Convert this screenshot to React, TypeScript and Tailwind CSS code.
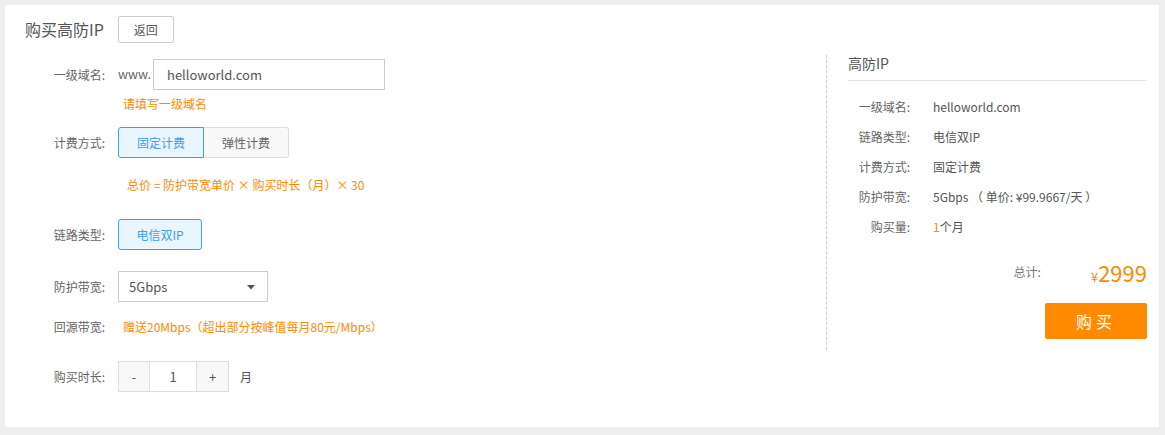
import React from "react";

const font = "font-['Noto_Sans_CJK_SC','Noto_Sans',sans-serif]";

const Label = ({ children }: { children: React.ReactNode }) => (
  <div className="w-[100px] shrink-0 text-right text-[12px] text-[#666]">{children}</div>
);

const summary = [
  { k: "一级域名:", v: "helloworld.com" },
  { k: "链路类型:", v: "电信双IP" },
  { k: "计费方式:", v: "固定计费" },
  { k: "防护带宽:", v: "5Gbps （ 单价: ¥99.9667/天 ）" },
];

const App = () => {
  return (
    <div className={`min-h-[435px] bg-[#eeeeee] pt-[5px] pl-[5px] pr-[6px] pb-[8px] ${font}`}>
      <div className="flex h-[422px] bg-white">
        {/* form */}
        <div className="flex-1">
          <div className="flex items-center pt-[11px] pl-[20px]">
            <h1 className="text-[16px] leading-[27px] text-[#555]">购买高防IP</h1>
            <button className="ml-[14px] h-[27px] w-[56px] rounded-[2px] border border-[#ccc] bg-white text-[12px] text-[#555]">
              返回
            </button>
          </div>

          <div className="mt-[16px] flex items-center">
            <Label>一级域名:</Label>
            <span className="ml-[13px] w-[35px] text-[12.5px] text-[#666]">www.</span>
            <div className="flex h-[31px] w-[232px] items-center border border-[#ccc] pl-[13px] text-[13px] text-[#555]">
              helloworld.com
            </div>
          </div>
          <div className="mt-[6px] pl-[118px] text-[12px] leading-[16px] text-[#ff8a00]">请填写一级域名</div>

          <div className="mt-[15px] flex items-center">
            <Label>计费方式:</Label>
            <div className="ml-[13px] flex">
              <div className="flex h-[31px] w-[86px] items-center justify-center rounded-l-[3px] border border-[#3d9df0] bg-[#eaf6ff] text-[12px] text-[#3d9df0]">
                固定计费
              </div>
              <div className="flex h-[31px] w-[85px] items-center justify-center rounded-r-[3px] border border-l-0 border-[#ddd] bg-[#f8f8f8] text-[12px] text-[#666]">
                弹性计费
              </div>
            </div>
          </div>
          <div className="mt-[19px] pl-[122px] text-[12px] leading-[16px] text-[#ff8a00]">
            总价 = 防护带宽单价 × 购买时长（月）× 30
          </div>

          <div className="mt-[26px] flex items-center">
            <Label>链路类型:</Label>
            <div className="ml-[13px] flex h-[31px] w-[84px] items-center justify-center rounded-[3px] border border-[#3d9df0] bg-[#eaf6ff] text-[12px] text-[#3d9df0]">
              电信双IP
            </div>
          </div>

          <div className="mt-[21px] flex items-center">
            <Label>防护带宽:</Label>
            <div className="ml-[13px] flex h-[31px] w-[150px] items-center justify-between border border-[#ccc] pl-[10px] pr-[11px] text-[13px] text-[#555]">
              <span>5Gbps</span>
              <svg width="10" height="6" viewBox="0 0 10 6">
                <path d="M1 1h8L5 5.5z" fill="#555" />
              </svg>
            </div>
          </div>

          <div className="mt-[17px] flex items-center leading-[16px]">
            <Label>回源带宽:</Label>
            <span className="ml-[18px] text-[12px] text-[#ff8a00]">
              赠送20Mbps（超出部分按峰值每月80元/Mbps）
            </span>
          </div>

          <div className="mt-[26px] flex items-center">
            <Label>购买时长:</Label>
            <div className="ml-[13px] flex h-[31px] border border-[#ddd] text-[13px] text-[#555]">
              <div className="flex w-[30px] items-center justify-center bg-[#f8f8f8]">-</div>
              <div className="flex w-[48px] items-center justify-center border-x border-[#ddd]">1</div>
              <div className="flex w-[31px] items-center justify-center bg-[#f8f8f8]">+</div>
            </div>
            <span className="ml-[11px] text-[12px] text-[#555]">月</span>
          </div>
        </div>

        {/* summary */}
        <div className="mt-[50px] h-[295px] w-[333px] border-l border-dashed border-[#ccc] pl-[21px] pr-[12px]">
          <div className="border-b border-[#e5e5e5] pb-[9px] text-[14px] leading-[16px] text-[#555]">高防IP</div>
          <div className="mt-[11px]">
            {summary.map((r) => (
              <div key={r.k} className="flex h-[30px] items-center text-[12px]">
                <span className="w-[62px] text-right text-[#666]">{r.k}</span>
                <span className="ml-[23px] text-[#555]">{r.v}</span>
              </div>
            ))}
            <div className="flex h-[30px] items-center text-[12px]">
              <span className="w-[62px] text-right text-[#666]">购买量:</span>
              <span className="ml-[23px] text-[#555]">
                <span className="text-[#ff8a00]">1</span>个月
              </span>
            </div>
          </div>
          <div className="mt-[15px] flex h-[30px] items-center justify-end">
            <span className="text-[12px] text-[#777]">总计:</span>
            <span className="ml-[50px] text-[#ff8a00]">
              <span className="text-[13px]">¥</span>
              <span className="text-[22px]">2999</span>
            </span>
          </div>
          <div className="mt-[16px] flex justify-end">
            <button className="h-[36px] w-[102px] rounded-[2px] bg-[#ff8a00] text-[16px] tracking-[4px] text-white">
              购买
            </button>
          </div>
        </div>
      </div>
    </div>
  );
};

export default App;
